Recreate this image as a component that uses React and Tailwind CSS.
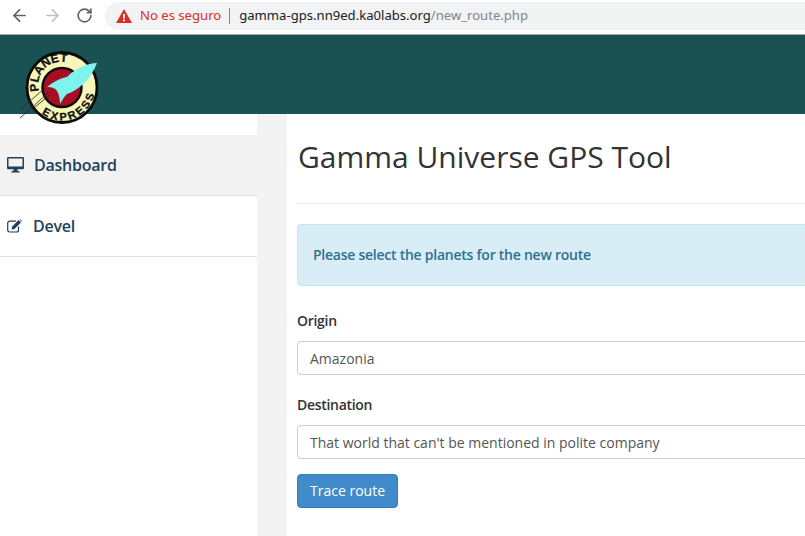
import React from 'react';
import { ArrowLeft, ArrowRight, RotateCw } from 'lucide-react';

const PlanetExpressLogo = () => (
    <svg viewBox="0 0 90 90" className="absolute left-[16px] top-[14px] w-[90px] h-[90px]">
        {/* Badge */}
        <circle cx="46" cy="38.5" r="35" fill="#f7f8b8" stroke="#0b0b0b" strokeWidth="2.8" />
        <circle cx="46" cy="38.5" r="19.5" fill="#a80f24" stroke="#0b0b0b" strokeWidth="2.4" />
        <defs>
            <path id="arc-top" d="M23.1 42 A23 23 0 0 1 62 20" />
            <path id="arc-bottom" d="M25.7 64.5 A33 33 0 0 0 79 37.4" />
        </defs>
        <text fontFamily="Liberation Sans, sans-serif" fontWeight="700" fontSize="12" fill="#111" stroke="#111" strokeWidth="0.3">
            <textPath href="#arc-top">PLANET</textPath>
        </text>
        <text fontFamily="Liberation Sans, sans-serif" fontWeight="700" fontSize="11" fill="#111" stroke="#111" strokeWidth="0.3" letterSpacing="2.4">
            <textPath href="#arc-bottom">EXPRESS</textPath>
        </text>
        {/* Speed lines */}
        <path d="M4 69 L32 44 M6 59 L29 39 M19 58 L34 46" stroke="#222" strokeWidth="0.8" fill="none" />
        {/* Rocket */}
        <path
            d="M81 14 C72 14 60 19 51 28 C45 29 37 33 31 38 C36 38 39 39 41 42 C43 45 44 50 44 55 C46 51 49 47 51 45 C61 42 75 31 81 14 Z"
            fill="#7df5ee"
        />
    </svg>
);

const DesktopIcon = () => (
    <svg viewBox="0 0 17 16" className="w-[17px] h-[16px] shrink-0" fill="currentColor">
        <path d="M1.3 0 H15.7 A1.3 1.3 0 0 1 17 1.3 V11 A1.3 1.3 0 0 1 15.7 12.3 H10.5 V14 H12.5 V15.5 H4.5 V14 H6.5 V12.3 H1.3 A1.3 1.3 0 0 1 0 11 V1.3 A1.3 1.3 0 0 1 1.3 0 Z M1.5 1.5 V9.5 H15.5 V1.5 Z" fillRule="evenodd" />
    </svg>
);

const EditIcon = () => (
    <svg viewBox="0 0 16 14" className="w-[16px] h-[14px] shrink-0">
        <path d="M11.5 7.5 V11 A2 2 0 0 1 9.5 13 H2.7 A2 2 0 0 1 0.7 11 V4.2 A2 2 0 0 1 2.7 2.2 H9" fill="none" stroke="currentColor" strokeWidth="1.2" />
        <path d="M5 7.7 L11.6 1.1 L14 3.5 L7.4 10.1 L4.6 10.5 Z M12.4 0.4 L13.2 0.2 L15 2 L14.7 2.8 Z" fill="currentColor" />
    </svg>
);

const App = () => {
    return (
        <div className="w-[805px] h-[536px] overflow-hidden bg-white flex flex-col font-['Open_Sans',sans-serif] text-[#333]">
            {/* Browser bar */}
            <div className="h-[35px] shrink-0 flex items-center bg-white border-b border-[#a8a8a8]">
                <div className="flex items-center gap-[14px] pl-[10px] w-[105px] mb-[3px]">
                    <ArrowLeft className="w-[19px] h-[19px] text-[#5f6368]" strokeWidth={2.2} />
                    <ArrowRight className="w-[19px] h-[19px] text-[#bdc1c6]" strokeWidth={2.2} />
                    <RotateCw className="w-[17px] h-[17px] text-[#5f6368]" strokeWidth={2.4} />
                </div>
                <div className="flex-1 h-[28px] mb-[3px] bg-[#f1f3f4] rounded-l-full flex items-center pl-[11px] font-['Noto_Sans',sans-serif] text-[13.1px]">
                    <svg viewBox="0 0 16 14" className="w-[16px] h-[14px] shrink-0">
                        <path d="M8 0 L16 14 L0 14 Z" fill="#d93025" />
                        <path d="M7.1 5 H8.9 V9.6 H7.1 Z M7.1 10.6 H8.9 V12.3 H7.1 Z" fill="#fff" />
                    </svg>
                    <span className="ml-[8px] text-[#d93025]">No es seguro</span>
                    <span className="mx-[8px] w-px h-[16px] bg-[#80868b]"></span>
                    <span className="ml-px text-[#202124]">gamma-gps.nn9ed.ka0labs.org</span>
                    <span className="text-[#80868b]">/new_route.php</span>
                </div>
            </div>

            {/* Header */}
            <header className="relative z-10 h-[79px] shrink-0 bg-[#1a5254]">
                <PlanetExpressLogo />
            </header>

            <div className="flex flex-1 min-h-0">
                {/* Sidebar */}
                <aside className="w-[257px] shrink-0 pt-[21px] bg-white text-[#23405c] text-[16px] font-semibold tracking-[-0.25px]">
                    <a className="h-[61px] flex items-center pl-[7px] gap-[10px] bg-[#f2f2f2] border-b border-[#e0e0e0]">
                        <DesktopIcon />
                        Dashboard
                    </a>
                    <a className="h-[61px] flex items-center pl-[7px] gap-[10px] border-b border-[#e0e0e0]">
                        <EditIcon />
                        Devel
                    </a>
                </aside>
                <div className="w-[30px] shrink-0 bg-[#f3f3f3]"></div>

                {/* Main */}
                <main className="w-[600px] shrink-0 pl-[10px]">
                    <h1 className="mt-[21px] pl-px text-[30px] leading-[44px] font-normal text-[#333]">Gamma Universe GPS Tool</h1>
                    <hr className="mt-[24px] border-[#eeeeee]" />
                    <div className="mt-[20px] h-[62px] flex items-center px-[15px] pb-[2px] bg-[#d9edf7] border border-[#bce8f1] rounded-[4px] text-[#31708f] text-[14px] font-semibold tracking-[-0.25px]">
                        Please select the planets for the new route
                    </div>
                    <label className="block mt-[25px] text-[14px] leading-[20px] font-semibold tracking-[-0.3px]">Origin</label>
                    <div className="mt-[10px] h-[34px] flex items-center px-[12px] border border-[#ccc] rounded-[4px] text-[14px] text-[#555]">Amazonia</div>
                    <label className="block mt-[20px] text-[14px] leading-[20px] font-semibold tracking-[-0.3px]">Destination</label>
                    <div className="mt-[10px] h-[34px] flex items-center px-[12px] border border-[#ccc] rounded-[4px] text-[14px] text-[#555]">That world that can't be mentioned in polite company</div>
                    <button className="mt-[15px] pb-px h-[34px] w-[101px] bg-[#428bca] border border-[#357ebd] rounded-[4px] text-white text-[14px]">Trace route</button>
                </main>
            </div>
        </div>
    );
};

export default App;
